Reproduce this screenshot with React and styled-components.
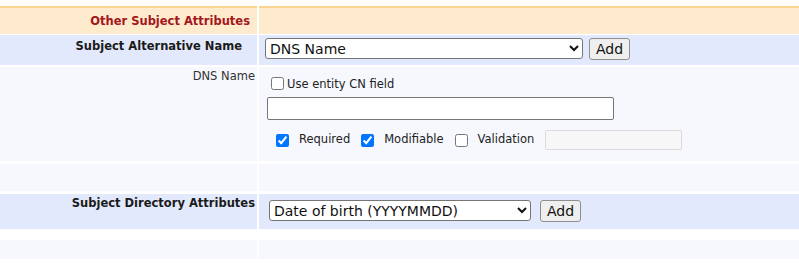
import styled, { createGlobalStyle } from "styled-components";

const GlobalStyle = createGlobalStyle`
  body {
    margin: 0;
    background: #ffffff;
    font-family: "DejaVu Sans", Verdana, sans-serif;
    font-size: 11.5px;
    color: #222;
  }
`;

const tones = {
  header: "#feebcd",
  section: "#e3e9fc",
  plain: "#f6f8fd",
};

const Page = styled.div`
  display: flex;
  flex-direction: column;
  padding-top: 6px;
`;

const Row = styled.div`
  display: grid;
  grid-template-columns: 257px 1fr;
  column-gap: 2px;
  margin-top: ${(p) => p.$space ?? 2}px;
  min-height: ${(p) => p.$height}px;
`;

const LabelCell = styled.div`
  background: ${(p) => tones[p.$tone]};
  border-top: ${(p) => (p.$tone === "header" ? "2px solid #fbd490" : "none")};
  display: flex;
  justify-content: flex-end;
  align-items: ${(p) => (p.$tone === "header" ? "center" : "flex-start")};
  padding: ${(p) => p.$top ?? 0}px ${(p) => p.$right ?? 2}px 0 0;
  line-height: 14px;
  font-weight: ${(p) => (p.$bold ? "bold" : "normal")};
  color: ${(p) => (p.$tone === "header" ? "#a3161b" : p.$bold ? "#1a1a1a" : "#333")};
`;

const FieldCell = styled.div`
  background: ${(p) => tones[p.$tone]};
  border-top: ${(p) => (p.$tone === "header" ? "2px solid #fbd490" : "none")};
  display: flex;
  flex-direction: ${(p) => (p.$stack ? "column" : "row")};
  align-items: flex-start;
  gap: ${(p) => p.$gap ?? 0}px;
  padding: ${(p) => p.$top ?? 0}px 0 0 ${(p) => p.$left ?? 0}px;
`;

const Select = styled.select`
  width: ${(p) => p.$w}px;
  height: 21px;
  margin: 0;
  font-family: "DejaVu Sans", Verdana, sans-serif;
  font-size: 14px;
  color: #111;
  background: #fff;
  border: 1px solid #767676;
  border-radius: 3px;
`;

const Button = styled.button`
  height: 22px;
  margin: 0;
  padding: 0 6px;
  font-family: "DejaVu Sans", Verdana, sans-serif;
  font-size: 14px;
  color: #111;
  background: #efefef;
  border: 1px solid #8f8f8f;
  border-radius: 3px;
`;

const CheckLine = styled.label`
  display: flex;
  align-items: center;
  height: 19px;
  color: #222;

  input {
    margin: 3px 3px 3px 4px;
  }
`;

const TextInput = styled.input`
  box-sizing: border-box;
  width: ${(p) => p.$w}px;
  height: ${(p) => p.$h}px;
  margin: ${(p) => p.$mt ?? 0}px 0 0;
  border: 1px solid ${(p) => (p.disabled ? "#dcdcdc" : "#767676")};
  border-radius: 2px;
  background: ${(p) => (p.disabled ? "#f7f7f7" : "#fff")};
`;

const Options = styled.div`
  display: flex;
  align-items: center;
  height: 20px;
  margin-top: 10px;
  padding-left: 9px;
  gap: 10px;

  input[type="checkbox"] {
    margin: 0;
    width: 13px;
    height: 13px;
  }
`;

const OptionText = styled.span`
  margin: 0 1px 3px 0;
  color: #222;
`;

const App = () => (
  <>
    <GlobalStyle />
    <Page>
      <Row $space={0} $height={28}>
        <LabelCell $tone="header" $right={7} $bold>
          Other Subject Attributes
        </LabelCell>
        <FieldCell $tone="header" />
      </Row>

      <Row $space={1} $height={30}>
        <LabelCell $tone="section" $top={4} $right={15} $bold>
          Subject Alternative Name
        </LabelCell>
        <FieldCell $tone="section" $top={3} $left={6} $gap={6}>
          <Select $w={318} defaultValue="dns">
            <option value="dns">DNS Name</option>
            <option value="ip">IP Address</option>
            <option value="email">RFC 822 Name</option>
          </Select>
          <Button>Add</Button>
        </FieldCell>
      </Row>

      <Row $space={2} $height={94}>
        <LabelCell $tone="plain" $top={2}>
          DNS Name
        </LabelCell>
        <FieldCell $tone="plain" $stack $top={7} $left={8}>
          <CheckLine>
            <input type="checkbox" />
            Use entity CN field
          </CheckLine>
          <TextInput type="text" $w={347} $h={23} $mt={4} />
          <Options>
            <input type="checkbox" defaultChecked />
            <OptionText>Required</OptionText>
            <input type="checkbox" defaultChecked />
            <OptionText>Modifiable</OptionText>
            <input type="checkbox" />
            <OptionText>Validation</OptionText>
            <TextInput type="text" disabled $w={137} $h={20} />
          </Options>
        </FieldCell>
      </Row>

      <Row $space={3} $height={27}>
        <LabelCell $tone="plain" />
        <FieldCell $tone="plain" />
      </Row>

      <Row $space={3} $height={35}>
        <LabelCell $tone="section" $top={2} $bold>
          Subject Directory Attributes
        </LabelCell>
        <FieldCell $tone="section" $top={6} $left={10} $gap={9}>
          <Select $w={262} defaultValue="dob">
            <option value="dob">Date of birth (YYYYMMDD)</option>
            <option value="pob">Place of birth</option>
            <option value="gender">Gender (M/F)</option>
          </Select>
          <Button>Add</Button>
        </FieldCell>
      </Row>

      <Row $space={11} $height={19}>
        <LabelCell $tone="plain" />
        <FieldCell $tone="plain" />
      </Row>
    </Page>
  </>
);

export default App;
